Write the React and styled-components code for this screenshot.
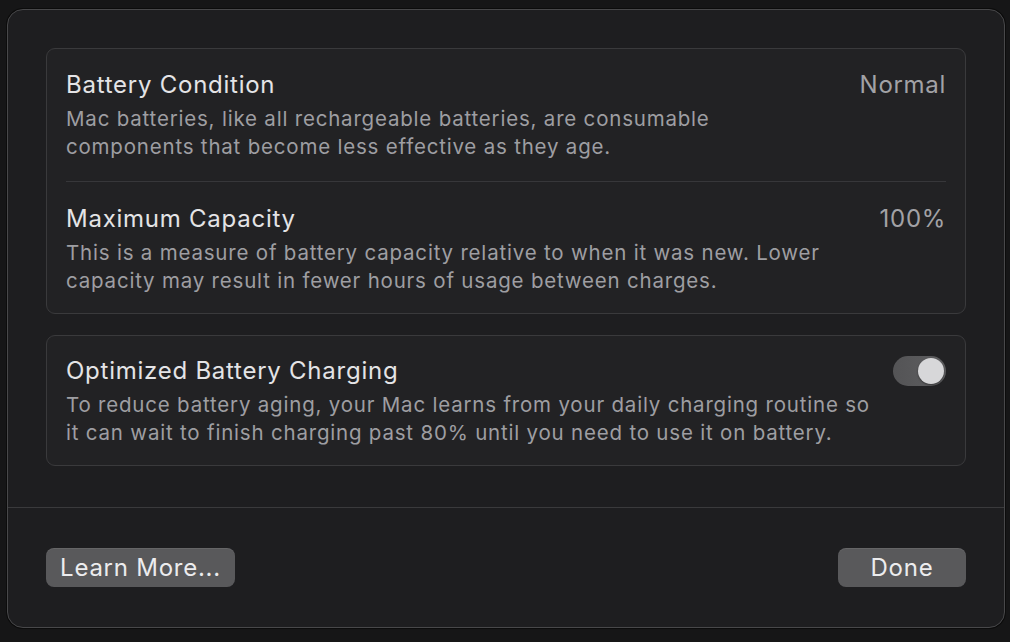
import React from "react";
import styled, { createGlobalStyle } from "styled-components";

const GlobalStyle = createGlobalStyle`
  html, body {
    margin: 0;
    padding: 0;
    background: #141415;
    width: 1010px;
    height: 642px;
    overflow: hidden;
    font-family: Inter, "Noto Sans", sans-serif;
    -webkit-font-smoothing: antialiased;
  }
`;

const Backdrop = styled.div`
  width: 1010px;
  height: 642px;
  box-sizing: border-box;
  padding: 9px 5px 14px 7px;
  background: #161617;
`;

const Dialog = styled.div`
  height: 100%;
  box-sizing: border-box;
  background: #1e1e20;
  border: 1px solid #48484a;
  border-radius: 16px;
  box-shadow: 0 0 0 1px #0c0c0c;
  display: flex;
  flex-direction: column;
`;

const Body = styled.div`
  flex: 1;
  padding: 38px 38px 0 38px;
  display: flex;
  flex-direction: column;
  gap: 21px;
`;

const Card = styled.div`
  background: #222224;
  border: 1px solid #3a3a3c;
  border-radius: 9px;
  padding: 0 19px;
`;

const Row = styled.div`
  display: flex;
  justify-content: space-between;
  align-items: flex-start;
  padding-top: ${(p) => p.top}px;
  padding-bottom: ${(p) => p.bottom}px;
  border-top: ${(p) => (p.divided ? "1px solid #37373a" : "none")};
`;

const TextCol = styled.div`
  display: flex;
  flex-direction: column;
`;

const Title = styled.div`
  font-size: 24px;
  line-height: 30px;
  color: #e4e4e6;
  letter-spacing: 0.75px;
`;

const Desc = styled.div`
  font-size: 20.5px;
  line-height: 28px;
  color: #9e9ea2;
  margin-top: 5px;
  letter-spacing: 0.8px;
  white-space: nowrap;
`;

const Value = styled.div`
  font-size: 24px;
  line-height: 30px;
  color: #a2a2a6;
  letter-spacing: 0.7px;
`;

const Toggle = styled.div`
  width: 53px;
  height: 30px;
  border-radius: 15px;
  background: linear-gradient(90deg, #545456, #5e5e60);
  box-sizing: border-box;
  padding: 2px;
  display: flex;
  justify-content: flex-end;
  flex-shrink: 0;
`;

const Knob = styled.div`
  width: 26px;
  height: 26px;
  border-radius: 50%;
  background: #d7d7d9;
  box-shadow: 0 1px 2px rgba(0, 0, 0, 0.4);
`;

const Footer = styled.div`
  border-top: 1px solid #3a3a3c;
  height: 120px;
  box-sizing: border-box;
  padding: 40px 38px 0 38px;
  display: flex;
  justify-content: space-between;
  align-items: flex-start;
`;

const Button = styled.button`
  height: 39px;
  width: ${(p) => p.w};
  border: none;
  border-radius: 8px;
  background: #59595b;
  color: #ececee;
  font-family: Inter, "Noto Sans", sans-serif;
  font-size: 24px;
  letter-spacing: 0.75px;
  padding: 0;
  box-shadow: inset 0 1px 0 rgba(255, 255, 255, 0.08);
`;

export default function App() {
  return (
    <>
      <GlobalStyle />
      <Backdrop>
        <Dialog>
          <Body>
            <Card>
              <Row top={21} bottom={20}>
                <TextCol>
                  <Title>Battery Condition</Title>
                  <Desc>
                    Mac batteries, like all rechargeable batteries, are consumable
                    <br />
                    components that become less effective as they age.
                  </Desc>
                </TextCol>
                <Value>Normal</Value>
              </Row>
              <Row top={22} bottom={18} divided>
                <TextCol>
                  <Title>Maximum Capacity</Title>
                  <Desc>
                    This is a measure of battery capacity relative to when it was new. Lower
                    <br />
                    capacity may result in fewer hours of usage between charges.
                  </Desc>
                </TextCol>
                <Value>100%</Value>
              </Row>
            </Card>
            <Card>
              <Row top={20} bottom={18}>
                <TextCol>
                  <Title>Optimized Battery Charging</Title>
                  <Desc>
                    To reduce battery aging, your Mac learns from your daily charging routine so
                    <br />
                    it can wait to finish charging past 80% until you need to use it on battery.
                  </Desc>
                </TextCol>
                <Toggle>
                  <Knob />
                </Toggle>
              </Row>
            </Card>
          </Body>
          <Footer>
            <Button w="189px">Learn More...</Button>
            <Button w="128px">Done</Button>
          </Footer>
        </Dialog>
      </Backdrop>
    </>
  );
}
